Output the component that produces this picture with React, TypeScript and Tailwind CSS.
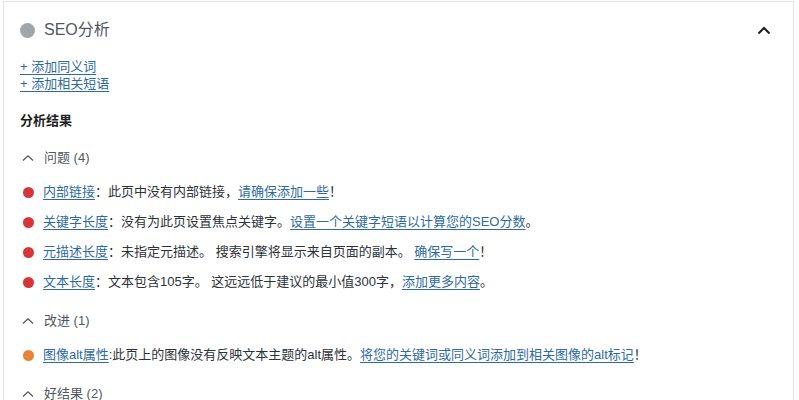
import type { ReactNode } from 'react';

const font = { fontFamily: '"Liberation Sans", "Noto Sans CJK SC", sans-serif' };

function SmallChevron() {
  return (
    <svg width="12" height="8" viewBox="0 0 12 8" className="shrink-0">
      <polyline points="1,6.5 6,1.8 11,6.5" fill="none" stroke="#50575e" strokeWidth="1.3" />
    </svg>
  );
}

function A({ children }: { children: ReactNode }) {
  return (
    <a href="#" className="text-[#2d6aa1] underline underline-offset-[3px] decoration-1">
      {children}
    </a>
  );
}

function Group({ title, children }: { title: string; children: ReactNode }) {
  return (
    <div>
      <div className="flex h-[30px] items-center gap-[10px] pl-[2px] text-[13px] text-[#50575e]">
        <SmallChevron />
        <span>{title}</span>
      </div>
      <ul className="pt-[4px] pb-[9px]">{children}</ul>
    </div>
  );
}

function Item({ color, children }: { color: string; children: ReactNode }) {
  return (
    <li className="flex h-[30px] items-center gap-[9px] text-[13px] text-[#2c3338]">
      <span className={`ml-[3px] h-[11px] w-[11px] shrink-0 rounded-full ${color}`} />
      <span className="leading-[18px]">{children}</span>
    </li>
  );
}

export default function App() {
  return (
    <div className="h-[400px] w-[799px] overflow-hidden bg-white" style={font}>
      <div className="ml-[3px] mt-[1px] h-[420px] w-[791px] border-l border-t border-r border-[#e2e4e7]">
        <div className="flex h-[56px] items-center pl-[16px] pr-[22px]">
          <span className="h-[15px] w-[15px] rounded-full bg-[#a2a6ab]" />
          <span className="ml-[9px] text-[16px] text-[#50575e]">SEO分析</span>
          <svg width="14" height="9" viewBox="0 0 14 9" className="ml-auto">
            <polyline points="1.5,7.5 7,2 12.5,7.5" fill="none" stroke="#1e1e1e" strokeWidth="2" />
          </svg>
        </div>
        <div className="px-[16px]">
          <div className="flex flex-col text-[13px] leading-[17px]">
            <A>+ 添加同义词</A>
            <A>+ 添加相关短语</A>
          </div>
          <div className="mt-[20px] text-[13px] font-bold leading-[18px] text-[#1e1e1e]">分析结果</div>
          <div className="mt-[13px]">
            <Group title="问题 (4)">
              <Item color="bg-[#d63638]">
                <A>内部链接</A>：此页中没有内部链接，<A>请确保添加一些</A>！
              </Item>
              <Item color="bg-[#d63638]">
                <A>关键字长度</A>：没有为此页设置焦点关键字。<A>设置一个关键字短语以计算您的SEO分数</A>。
              </Item>
              <Item color="bg-[#d63638]">
                <A>元描述长度</A>：未指定元描述。 搜索引擎将显示来自页面的副本。 <A>确保写一个</A>！
              </Item>
              <Item color="bg-[#d63638]">
                <A>文本长度</A>：文本包含105字。 这远远低于建议的最小值300字，<A>添加更多内容</A>。
              </Item>
            </Group>
            <Group title="改进 (1)">
              <Item color="bg-[#e8833a]">
                <A>图像alt属性</A>:此页上的图像没有反映文本主题的alt属性。<A>将您的关键词或同义词添加到相关图像的alt标记</A>！
              </Item>
            </Group>
            <Group title="好结果 (2)">
              <Item color="bg-[#00a32a]">
                <A>外部链接</A>：您已链接到外部资源。
              </Item>
            </Group>
          </div>
        </div>
      </div>
    </div>
  );
}
